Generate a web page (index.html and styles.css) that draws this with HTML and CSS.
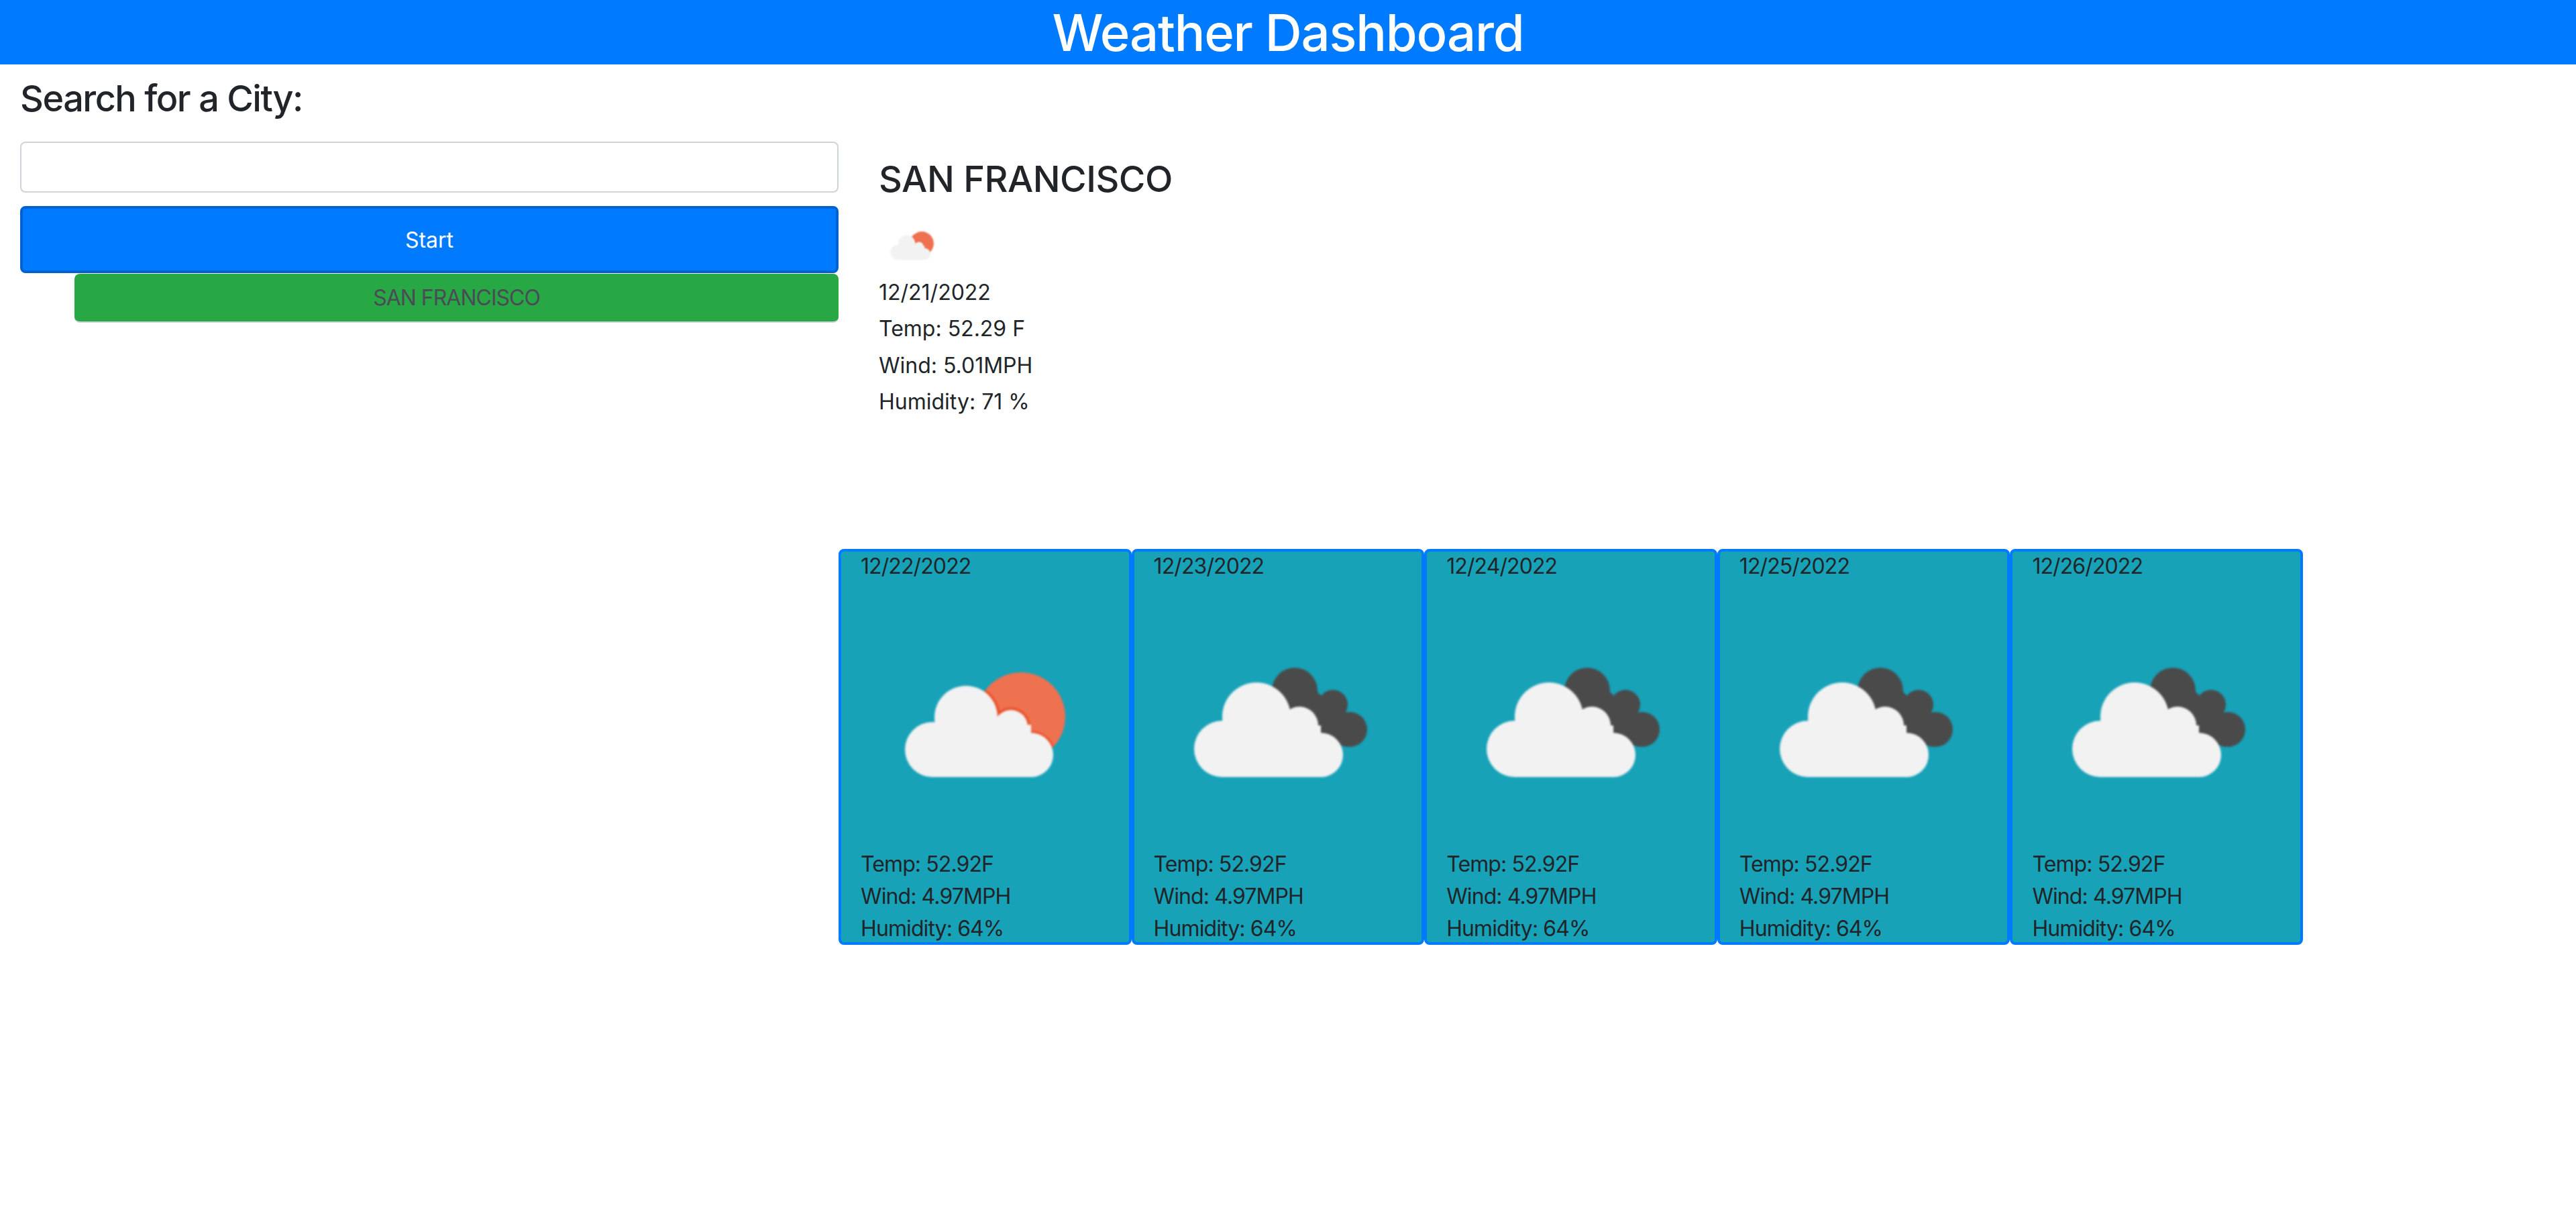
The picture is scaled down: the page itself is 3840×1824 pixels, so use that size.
FILE: index.html
```html
<!DOCTYPE html>
<html lang="en">

<head>
    <meta charset="UTF-8">
    <title>Weather Dashboard</title>
    <link rel="stylesheet" href="styles.css">
</head>

<body>
    <svg class="icon-defs" width="0" height="0">
        <defs>
            <clipPath id="sun-clip"><circle cx="222" cy="118" r="66"/></clipPath>
            <symbol id="cloud-sun" viewBox="0 0 340 240">
                <circle cx="222" cy="118" r="66" fill="#ee7150"/>
                <g clip-path="url(#sun-clip)" fill="#e9532c">
                    <circle cx="140" cy="119" r="51"/>
                    <circle cx="207" cy="133" r="29"/>
                    <circle cx="237" cy="176" r="37"/>
                </g>
                <g fill="#f2f2f2">
                    <circle cx="90" cy="167" r="41"/>
                    <circle cx="140" cy="119" r="47"/>
                    <circle cx="207" cy="133" r="25"/>
                    <circle cx="237" cy="175" r="33"/>
                    <rect x="90" y="130" width="147" height="78"/>
                </g>
            </symbol>
            <symbol id="cloud-dark" viewBox="0 0 340 240">
                <g fill="#4a4a4a">
                    <circle cx="193" cy="79" r="34"/>
                    <circle cx="250" cy="100" r="22"/>
                    <circle cx="275" cy="137" r="26"/>
                    <polygon points="170,70 222,76 236,90 262,108 272,113 290,125 270,163 190,140"/>
                </g>
                <g fill="#f2f2f2">
                    <circle cx="85" cy="166" r="42"/>
                    <circle cx="136" cy="118" r="51"/>
                    <circle cx="200" cy="131" r="28"/>
                    <circle cx="232" cy="175" r="33"/>
                    <rect x="85" y="131" width="147" height="77"/>
                </g>
            </symbol>
        </defs>
    </svg>

    <h1 class="page-title">Weather Dashboard</h1>

    <div class="top-row">
        <div class="search-col">
            <h3 class="search-title">Search for a City:</h3>
            <input class="city-input" type="text">
            <button class="start-btn">Start</button>
            <div class="history">
                <button class="history-btn">SAN FRANCISCO</button>
            </div>
        </div>
        <div class="today-col">
            <h3 class="today-city">SAN FRANCISCO</h3>
            <svg class="today-icon"><use href="#cloud-sun"/></svg>
            <p class="today-line">12/21/2022</p>
            <p class="today-line">Temp: 52.29 F</p>
            <p class="today-line">Wind: 5.01MPH</p>
            <p class="today-line">Humidity: 71 %</p>
        </div>
    </div>

    <div class="forecast">
        <div class="card">
            <p>12/22/2022</p>
            <svg class="card-icon"><use href="#cloud-sun"/></svg>
            <p>Temp: 52.92F</p>
            <p>Wind: 4.97MPH</p>
            <p>Humidity: 64%</p>
        </div>
        <div class="card">
            <p>12/23/2022</p>
            <svg class="card-icon"><use href="#cloud-dark"/></svg>
            <p>Temp: 52.92F</p>
            <p>Wind: 4.97MPH</p>
            <p>Humidity: 64%</p>
        </div>
        <div class="card">
            <p>12/24/2022</p>
            <svg class="card-icon"><use href="#cloud-dark"/></svg>
            <p>Temp: 52.92F</p>
            <p>Wind: 4.97MPH</p>
            <p>Humidity: 64%</p>
        </div>
        <div class="card">
            <p>12/25/2022</p>
            <svg class="card-icon"><use href="#cloud-dark"/></svg>
            <p>Temp: 52.92F</p>
            <p>Wind: 4.97MPH</p>
            <p>Humidity: 64%</p>
        </div>
        <div class="card">
            <p>12/26/2022</p>
            <svg class="card-icon"><use href="#cloud-dark"/></svg>
            <p>Temp: 52.92F</p>
            <p>Wind: 4.97MPH</p>
            <p>Humidity: 64%</p>
        </div>
    </div>
</body>

</html>
```

FILE: styles.css
```css
* {
    margin: 0;
    padding: 0;
    box-sizing: border-box;
}

body {
    font-family: Inter, "Liberation Sans", sans-serif;
    font-size: 32px;
    line-height: 48px;
    color: #212529;
    background: #fff;
}

.icon-defs {
    display: block;
    height: 0;
}

.page-title {
    height: 96px;
    background: #007bff;
    color: #fff;
    font-size: 76px;
    font-weight: 500;
    line-height: 96px;
    text-align: center;
    letter-spacing: -1.2px;
}

.top-row {
    display: flex;
    height: 722px;
}

.search-col {
    width: 1280px;
    padding: 0 30px;
}

.search-title {
    font-size: 54px;
    font-weight: 500;
    line-height: 66px;
    margin-top: 18px;
    letter-spacing: -1.5px;
}

.city-input {
    display: block;
    width: 100%;
    height: 76px;
    margin-top: 31px;
    border: 2px solid #ced4da;
    border-radius: 8px;
    background: #fff;
}

.start-btn {
    display: block;
    width: 100%;
    height: 100px;
    margin-top: 20px;
    padding-top: 2px;
    border: 4px solid #0062cc;
    border-radius: 8px;
    background: #007bff;
    color: #fff;
    font: inherit;
}

.history {
    padding-left: 81px;
    margin-top: 1px;
}

.history-btn {
    display: block;
    width: 100%;
    height: 73px;
    border: 0;
    border-bottom: 2px solid #ced4da;
    border-radius: 8px;
    background: #28a745;
    color: #4b4b55;
    font: inherit;
    letter-spacing: -1px;
}

.today-col {
    padding: 0 30px;
}

.today-city {
    font-size: 54px;
    font-weight: 500;
    line-height: 66px;
    margin-top: 138px;
    letter-spacing: -0.5px;
}

.today-icon {
    display: block;
    width: 92px;
    height: 65px;
    margin: 31px 0 0 4px;
    filter: blur(1px);
}

.today-line {
    line-height: 54.4px;
}

.today-line:first-of-type {
    margin-top: 13px;
}

.forecast {
    display: grid;
    grid-template-columns: repeat(5, 436.6px);
    margin-left: 1250px;
}

.card {
    height: 590px;
    padding-left: 29px;
    border: 4px solid #007bff;
    border-radius: 8px;
    background: #17a2b8;
    line-height: 48px;
    letter-spacing: -0.9px;
    overflow: hidden;
}

.card p {
    margin-top: -2px;
    height: 48px;
}

.card p + p {
    margin-top: 0;
}

.card-icon {
    display: block;
    width: 340px;
    height: 240px;
    margin: 82px 0 76px 17px;
    filter: blur(1.5px);
}
```
